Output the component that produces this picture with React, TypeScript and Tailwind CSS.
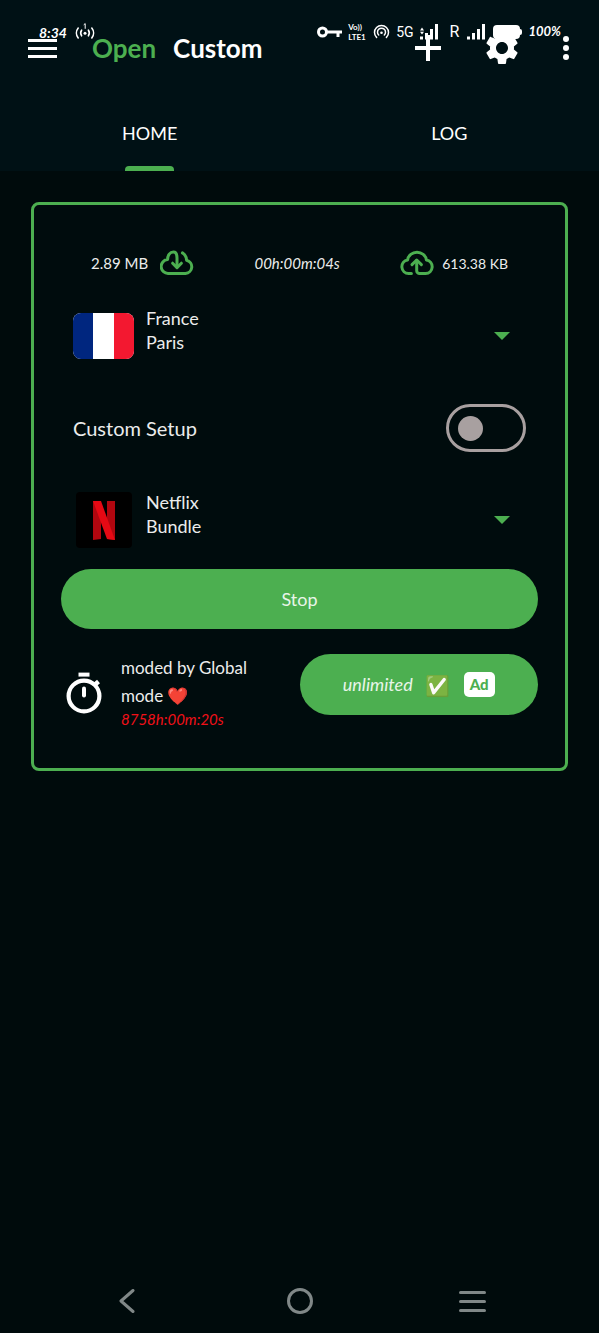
import { useState } from 'react';
import { MdSettings } from 'react-icons/md';

function DownloadCloud() {
  return (
    <svg className="h-[26px] w-[34px]" viewBox="0 0 34 26" fill="none" stroke="#4caf50" strokeWidth="3" strokeLinecap="round" strokeLinejoin="round">
      <path d="M17 17V8C17 4 15.6 2.1 13.4 2.1C10 2.1 7.6 5 7.6 9.6A6.9 6.9 0 0 0 8.5 23.4H25.5A6.7 6.7 0 0 0 26.6 10.2C26.4 7 25 4.4 22.4 2.9" />
      <path d="M12.6 13.2L17 17.6L21.4 13.2" />
    </svg>
  );
}

function UploadCloud() {
  return (
    <svg className="h-[26px] w-[34px]" viewBox="0 0 34 26" fill="none" stroke="#4caf50" strokeWidth="3" strokeLinecap="round" strokeLinejoin="round">
      <path d="M11.4 23.6H8.6A6.9 6.9 0 0 1 7.6 9.9A9.5 9 0 0 1 26.4 9.9A6.9 6.9 0 0 1 25.6 23.6H19.6A2.9 2.9 0 0 1 16.7 20.7V10.6" />
      <path d="M12 14.6L16.7 10L21.4 14.6" />
    </svg>
  );
}

function Stopwatch() {
  return (
    <svg className="h-[42px] w-9 shrink-0" viewBox="0 0 36 42" fill="none" stroke="#ffffff">
      <circle cx="18" cy="24" r="15.4" strokeWidth="4.2" />
      <path d="M12.5 2.6H23.5" strokeWidth="4" />
      <path d="M18 16.5V23.5" strokeWidth="4" strokeLinecap="round" />
      <path d="M28.5 13L32.5 9.5" strokeWidth="4.5" />
    </svg>
  );
}

function Hotspot() {
  return (
    <svg className="h-4 w-[17px]" viewBox="0 0 17 16" fill="none" stroke="#ffffff" strokeWidth="1.5" strokeLinecap="round">
      <path d="M3.6 13.4A7 7 0 1 1 13.4 13.4" />
      <path d="M5.7 11A4 4 0 1 1 11.3 11" />
      <circle cx="8.5" cy="8.8" r="1.3" fill="#ffffff" stroke="none" />
    </svg>
  );
}

function SignalBars({ data = false }: { data?: boolean }) {
  return (
    <svg className="h-4 w-[18px]" viewBox="0 0 18 16" fill="#ffffff">
      {data ? <path d="M2 3.5L4 6.5H0ZM2 10.5L4 7.7H0Z" /> : null}
      <rect x="0" y="12.5" width="3" height="3" />
      <rect x="5" y="9" width="3" height="6.5" />
      <rect x="10" y="5" width="3" height="10.5" />
      <rect x="15" y="0" width="3" height="15.5" />
    </svg>
  );
}

function StatusBar() {
  return (
    <div className="pointer-events-none absolute inset-x-0 top-0 flex h-16 items-center justify-between pr-[38px] pl-[39px] text-white">
      <div className="flex items-center gap-2">
        <span className="text-[14px] font-bold italic">8:34</span>
        <svg className="h-5 w-5" viewBox="0 0 20 20" fill="none" stroke="#ffffff" strokeWidth="1.6" strokeLinecap="round">
          <path d="M3.2 6A8 8 0 0 0 3.2 16M16.8 6A8 8 0 0 1 16.8 16M6.6 8.2A5 5 0 0 0 6.6 13.8M13.4 8.2A5 5 0 0 1 13.4 13.8" />
          <path d="M9 2.6L10.2 1.6V6.4" strokeWidth="1" />
          <circle cx="10" cy="11.2" r="1.5" fill="#ffffff" stroke="none" />
        </svg>
      </div>
      <div className="flex items-center gap-1.5">
        <svg className="h-3 w-[25px]" viewBox="0 0 25 12" fill="none" stroke="#ffffff" strokeWidth="3">
          <circle cx="5.5" cy="6" r="4" />
          <path d="M9.5 6H25M21 6V11" />
        </svg>
        <span className="grid w-[19px] text-[8px] leading-[10px] font-bold">
          <span>Vo))</span>
          <span>LTE1</span>
        </span>
        <Hotspot />
        <span className="font-[Roboto] text-[14px] leading-4">5G</span>
        <SignalBars data />
        <span className="mr-0.5 ml-1.5 font-[Roboto] text-[16px] leading-4">R</span>
        <SignalBars />
        <span className="ml-0.5 flex items-center">
          <span className="h-3.5 w-[27px] rounded-[4px] bg-white" />
          <span className="h-1.5 w-0.5 rounded-r bg-white" />
        </span>
        <span className="text-[13px] font-bold italic">100%</span>
      </div>
    </div>
  );
}

interface PickerProps {
  label: string;
  title: string;
  subtitle: string;
  children: React.ReactNode;
}

function Picker({ label, title, subtitle, children }: PickerProps) {
  return (
    <label className="relative flex h-[72px] items-center px-3">
      <span className="flex w-[61px] shrink-0 justify-center">{children}</span>
      <span className="ml-3 flex flex-1 flex-col self-start pt-1.5 text-[18px] leading-6 text-[#ececec]">
        <span>{title}</span>
        <span>{subtitle}</span>
      </span>
      <svg className="mr-4 h-2 w-4" viewBox="0 0 16 8" fill="#4caf50">
        <path d="M0 0H16L8 8Z" />
      </svg>
      <select aria-label={label} className="absolute inset-0 cursor-pointer opacity-0">
        <option>{title} {subtitle}</option>
      </select>
    </label>
  );
}

const tabs = ['HOME', 'LOG'];

export default function App() {
  const [activeTab, setActiveTab] = useState('HOME');
  const [customSetup, setCustomSetup] = useState(false);

  return (
    <div className="flex min-h-screen flex-col bg-[#000b0c] font-[Lato,'Noto_Sans',sans-serif]">
      <header className="relative bg-[#001115] text-white">
        <div className="flex h-24 items-center pr-[30px] pl-7">
          <button aria-label="Menu" className="flex w-[29px] flex-col gap-[5px]">
            <span className="h-[3px] w-full bg-white" />
            <span className="h-[3px] w-full bg-white" />
            <span className="h-[3px] w-full bg-white" />
          </button>
          <h1 className="ml-[35px] flex gap-[17px] text-[26px] font-bold">
            <span className="text-[#4caf50]">Open</span>
            <span>Custom</span>
          </h1>
          <div className="ml-auto flex items-center">
            <button aria-label="Add" className="mr-[41px]">
              <svg className="h-[26px] w-[26px]" viewBox="0 0 26 26" stroke="#ffffff" strokeWidth="4">
                <path d="M13 0V26M0 13H26" />
              </svg>
            </button>
            <button aria-label="Settings" className="mr-[41px]">
              <MdSettings className="h-10 w-10" />
            </button>
            <button aria-label="More" className="flex flex-col gap-[3px]">
              <span className="size-1.5 rounded-full bg-white" />
              <span className="size-1.5 rounded-full bg-white" />
              <span className="size-1.5 rounded-full bg-white" />
            </button>
          </div>
        </div>
        <nav className="grid h-[75px] grid-cols-2">
          {tabs.map((tab) => (
            <button key={tab} onClick={() => setActiveTab(tab)} className="relative text-[18px]">
              {tab}
              {activeTab === tab ? (
                <span className="absolute inset-x-0 bottom-0 mx-auto h-[5px] w-[49px] rounded-t-[4px] bg-[#4caf50]" />
              ) : null}
            </button>
          ))}
        </nav>
        <StatusBar />
      </header>

      <main className="px-[31px] pt-[31px]">
        <section className="rounded-lg border-[3px] border-[#4caf50] bg-[#000c0d] px-[27px] pt-[42px] pb-[39px]">
          <div className="flex h-8 items-center justify-between px-[30px] text-[15px] text-[#ececec]">
            <span className="flex items-center gap-3">
              2.89 MB
              <DownloadCloud />
            </span>
            <span className="italic">00h:00m:04s</span>
            <span className="flex items-center gap-2 text-[14px]">
              <UploadCloud />
              613.38 KB
            </span>
          </div>

          <div className="mt-[21px]">
            <Picker label="Server" title="France" subtitle="Paris">
              <svg className="h-[46px] w-[61px] rounded-lg" viewBox="0 0 61 46">
                <rect width="61" height="46" fill="#ffffff" />
                <rect width="20" height="46" fill="#00267f" />
                <rect x="41" width="20" height="46" fill="#f31830" />
              </svg>
            </Picker>
          </div>

          <label className="mt-8 flex h-12 items-center justify-between px-3 text-[20px] text-[#ececec]">
            Custom Setup
            <input
              type="checkbox"
              role="switch"
              checked={customSetup}
              onChange={(e) => setCustomSetup(e.target.checked)}
              className="flex h-12 w-20 appearance-none items-center rounded-full border-[3px] border-[#a8a0a0] px-[9px] before:size-[25px] before:rounded-full before:bg-[#a8a0a0] checked:justify-end"
            />
          </label>

          <div className="mt-8">
            <Picker label="Payload" title="Netflix" subtitle="Bundle">
              <svg className="size-14" viewBox="0 0 56 56">
                <rect width="56" height="56" rx="4" fill="#000000" />
                <path d="M17 9H25V47L17 48Z" fill="#b1060f" />
                <path d="M31 9H39V48L31 47Z" fill="#b1060f" />
                <path d="M17 9H25L39 48L31 47Z" fill="#e50914" />
              </svg>
            </Picker>
          </div>

          <button className="mt-[13px] h-[60px] w-full rounded-full bg-[#4caf50] text-[18px] text-[#e8f5e9]">Stop</button>

          <div className="mt-[25px] grid grid-cols-2">
            <div className="flex gap-[19px] pl-[5px]">
              <div className="pt-[18px]">
                <Stopwatch />
              </div>
              <div className="pr-11 text-[17px] text-[#ececec]">
                <p className="leading-7">moded by Global mode ❤️</p>
                <p className="text-[15px] leading-[19px] text-[#f01018] italic">8758h:00m:20s</p>
              </div>
            </div>
            <button className="flex h-[61px] items-center justify-center rounded-full bg-[#4caf50] text-[18px] text-[#e8f5e9]">
              <span className="italic">unlimited</span>
              <span className="ml-3 text-[20px]">✅</span>
              <span className="ml-3.5 flex h-[25px] w-[31px] items-center justify-center rounded-[5px] bg-white text-[15px] font-black text-[#4caf50]">
                Ad
              </span>
            </button>
          </div>
        </section>
      </main>

      <nav className="mt-auto grid h-16 grid-cols-3 items-center justify-items-center px-10">
        <button aria-label="Back">
          <svg className="h-6 w-4" viewBox="0 0 16 24" fill="none" stroke="#808888" strokeWidth="3" strokeLinecap="round" strokeLinejoin="round">
            <path d="M14 1.5L2 12L14 22.5" />
          </svg>
        </button>
        <button aria-label="Home" className="size-[26px] rounded-full border-[3px] border-[#808888]" />
        <button aria-label="Recent apps" className="flex w-[27px] flex-col gap-1.5">
          <span className="h-[3px] w-full rounded-full bg-[#808888]" />
          <span className="h-[3px] w-full rounded-full bg-[#808888]" />
          <span className="h-[3px] w-full rounded-full bg-[#808888]" />
        </button>
      </nav>
    </div>
  );
}
